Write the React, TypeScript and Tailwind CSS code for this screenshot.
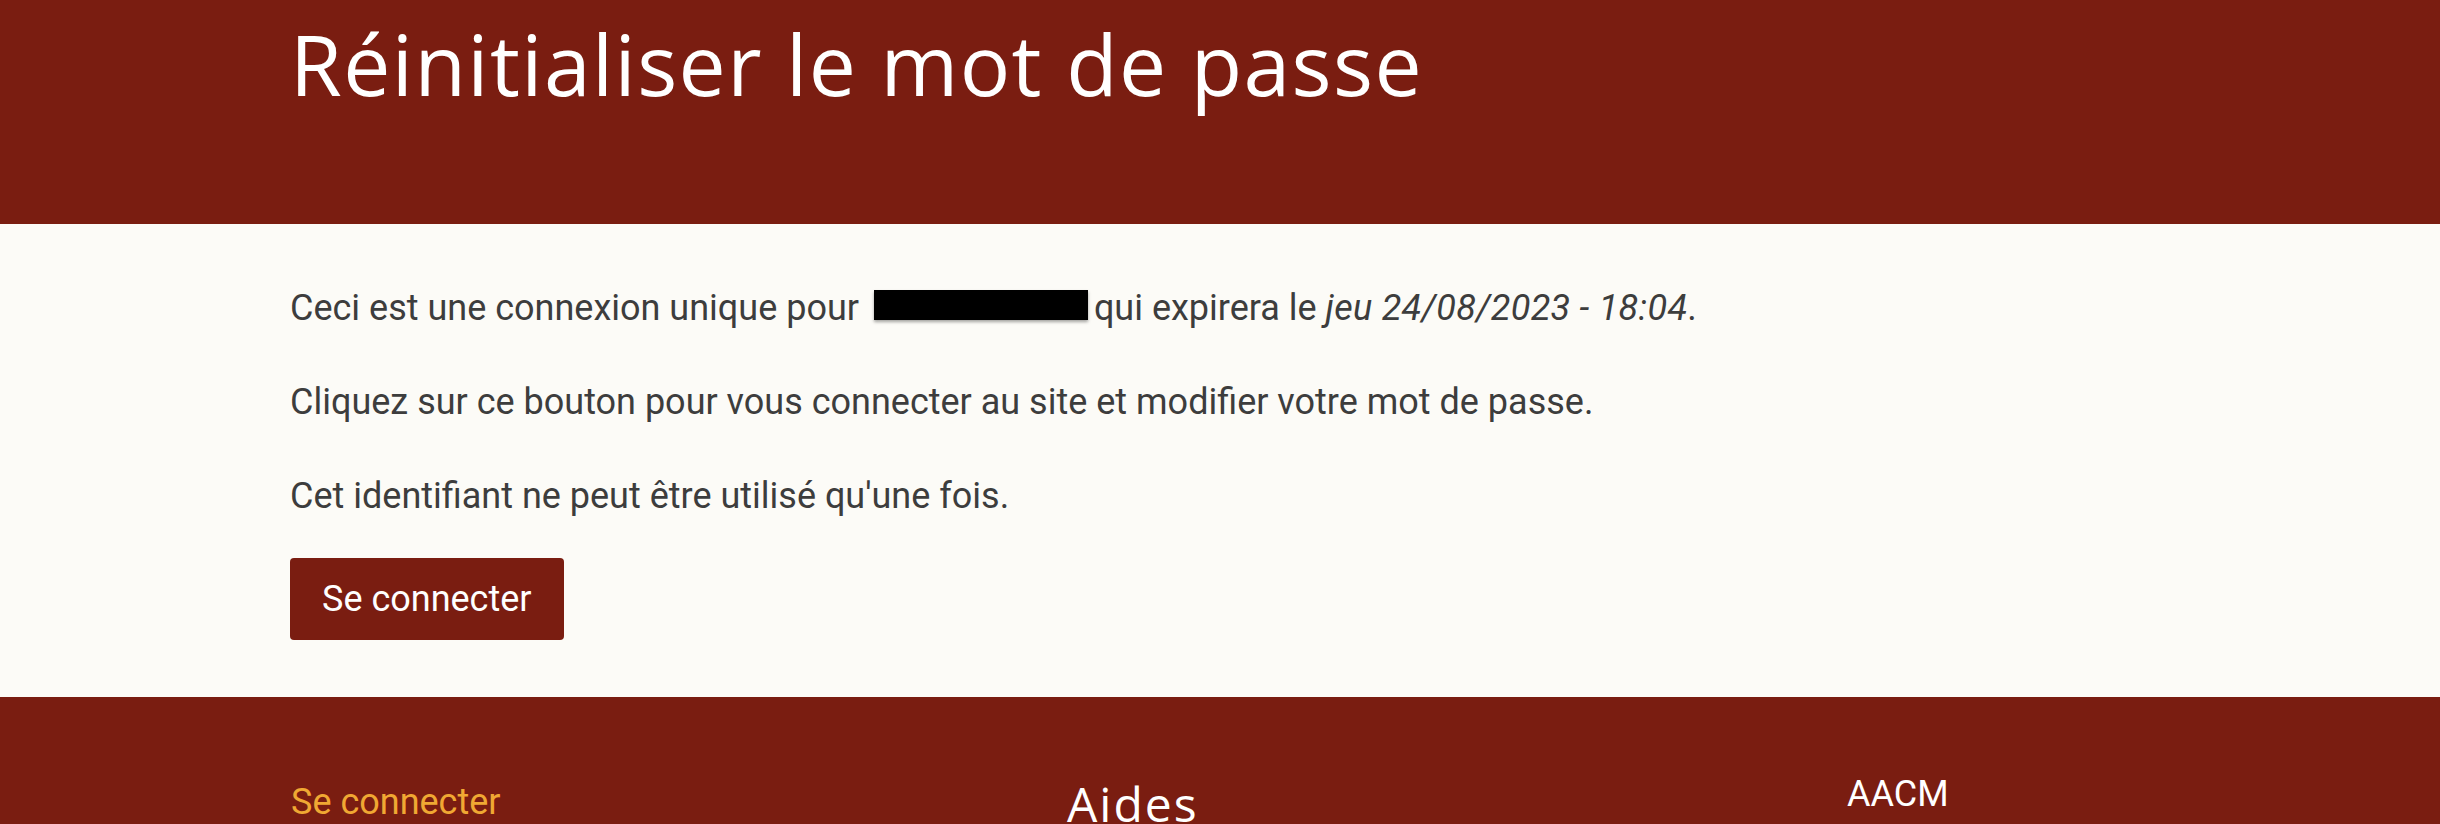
import React from "react";

const bodyFont = { fontFamily: "Roboto, 'Liberation Sans', sans-serif" };

const Header: React.FC = () => (
  <header className="bg-[#7a1d11] h-[224px] pl-[290px]">
    <h1 className="pt-[14px] text-[84px] leading-[1.2] tracking-[1.4px] text-white font-normal font-['Open_Sans',sans-serif]">
      Réinitialiser le mot de passe
    </h1>
  </header>
);

const Footer: React.FC = () => (
  <footer className="bg-[#7a1d11] h-[200px] pl-[291px] pt-[78px] flex">
    <div className="w-[776px]">
      <a href="#" className="text-[36px] leading-[54px] text-[#f0a833]" style={bodyFont}>
        Se connecter
      </a>
    </div>
    <div className="w-[780px]">
      <h2 className="text-[48px] leading-[1.2] tracking-[2px] text-white font-normal font-['Open_Sans',sans-serif]">Aides</h2>
    </div>
    <div className="-mt-[8px]">
      <div className="text-[36px] leading-[54px] text-white" style={bodyFont}>
        AACM
      </div>
    </div>
  </footer>
);

export default function App() {
  return (
    <div className="w-[2440px] h-[824px] overflow-hidden bg-[#fcfbf7]">
      <Header />
      <main className="pl-[290px] pt-[57px] pb-[57px] text-[36px] leading-[54px] text-[#3d3d3d]" style={bodyFont}>
        <p>
          Ceci est une connexion unique pour{" "}
          <span className="inline-block w-[214px] h-[30px] bg-black ml-[6px] mr-[6px] shadow-[0_2px_3px_rgba(0,0,0,0.35)]"></span>
          qui expirera le <em className="tracking-[0.3px]">jeu 24/08/2023 - 18:04</em>.
        </p>
        <p className="mt-[40px]">Cliquez sur ce bouton pour vous connecter au site et modifier votre mot de passe.</p>
        <p className="mt-[40px]">Cet identifiant ne peut être utilisé qu'une fois.</p>
        <button className="mt-[35px] block bg-[#7a1d11] text-white rounded-[4px] px-[32px] py-[14px] text-[36px] leading-[54px]">
          Se connecter
        </button>
      </main>
      <Footer />
    </div>
  );
}
